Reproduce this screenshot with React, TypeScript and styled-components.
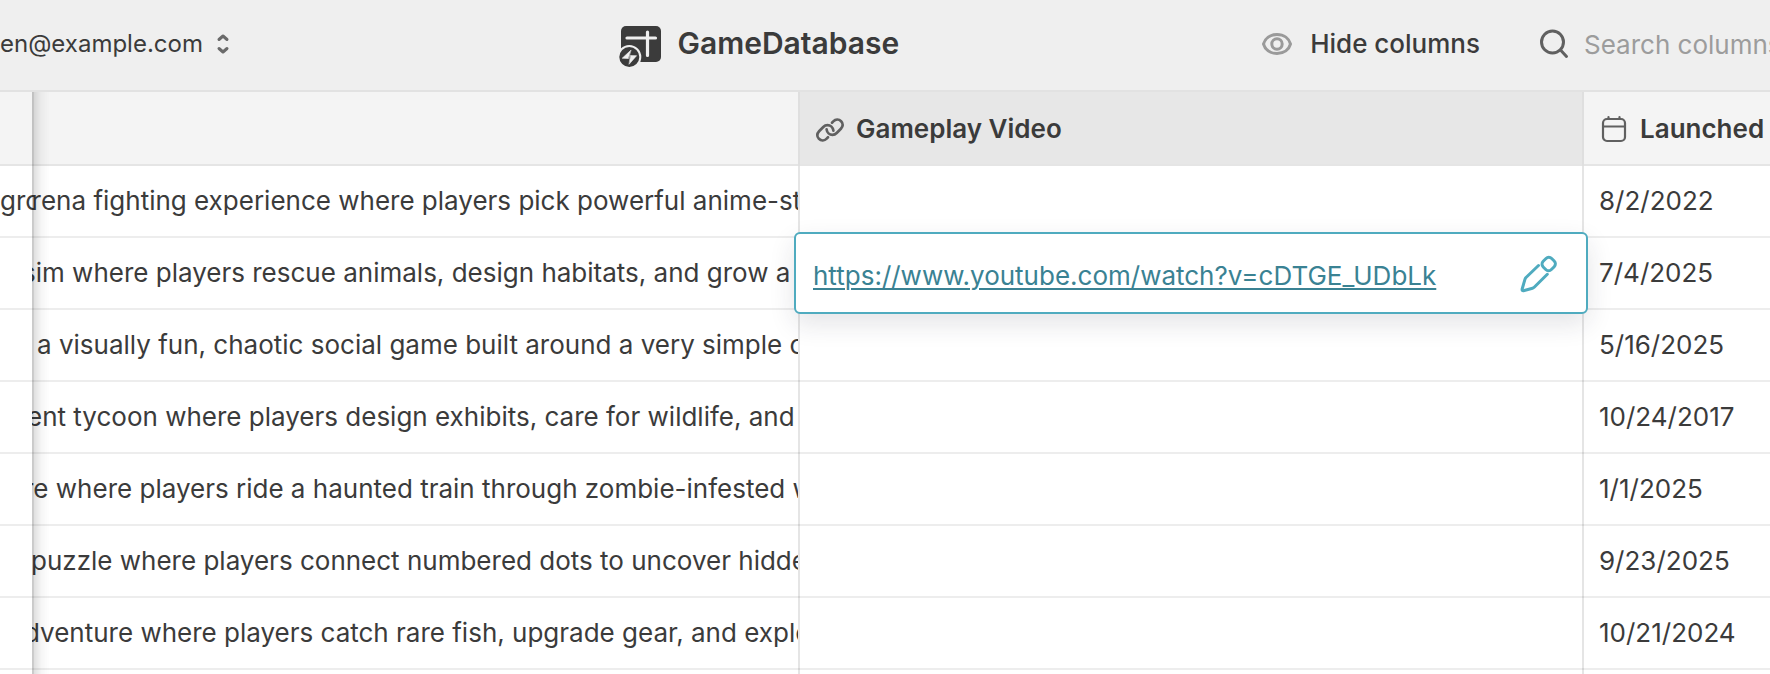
import React from "react";
import styled, { createGlobalStyle } from "styled-components";

const GlobalStyle = createGlobalStyle`
  * { box-sizing: border-box; }
  body { margin: 0; background: #fff; overflow: hidden; }
`;

const Page = styled.div`
  height: 100vh;
  overflow: hidden;
  color: #3b3b3b;
  font-family: Inter, "Liberation Sans", sans-serif;
  font-size: 26px;
  line-height: 32px;
`;

const TopBar = styled.header`
  display: flex;
  align-items: center;
  height: 92px;
  padding-bottom: 4px;
  background: #efefef;
  box-shadow: inset 0 -2px 0 #e2e2e2;
  overflow: hidden;
`;

const PlainButton = styled.button`
  display: flex;
  align-items: center;
  padding: 0;
  border: 0;
  background: none;
  color: inherit;
  font: inherit;
  white-space: nowrap;
`;

const Account = styled.div`
  flex: 0 0 35%;
`;

const AccountButton = styled(PlainButton)`
  gap: 14px;
  font-size: 24px;
`;

const Brand = styled.h1`
  display: flex;
  align-items: center;
  gap: 16px;
  margin: 0;
  padding-bottom: 2px;
  font-size: 30px;
  font-weight: 600;
  line-height: 36px;
`;

const Tools = styled.div`
  display: flex;
  align-items: center;
  gap: 60px;
  margin-left: auto;
`;

const HideButton = styled(PlainButton)`
  gap: 18px;
  font-weight: 500;
`;

const Search = styled.label`
  display: flex;
  align-items: center;
  gap: 16px;
`;

const SearchInput = styled.input`
  width: 186px;
  padding: 2px 0 0;
  border: 0;
  outline: 0;
  background: none;
  color: inherit;
  font: inherit;
  &::placeholder { color: #9c9c9c; opacity: 1; }
`;

const Sheet = styled.table`
  width: 100%;
  table-layout: fixed;
  border-collapse: separate;
  border-spacing: 0;
`;

const Column = styled.col<{ $width?: number }>`
  width: ${(p) => (p.$width ? p.$width + "px" : "auto")};
`;

const HeadCell = styled.th<{ $active?: boolean; $ruled?: boolean }>`
  position: relative;
  height: 74px;
  padding: 0;
  background: ${(p) => (p.$active ? "#e7e7e7" : "#f4f4f4")};
  box-shadow: inset ${(p) => (p.$ruled ? "-2px" : "0")} 0 0 #dfdfdf, inset 0 -2px 0 #e5e5e5;
  font-weight: 600;
  text-align: left;
`;

const HeadLabel = styled.div`
  display: flex;
  align-items: center;
  gap: 12px;
  padding-left: 16px;
  white-space: nowrap;
`;

const Cell = styled.td<{ $ruled?: boolean }>`
  position: relative;
  height: 72px;
  padding: 0 0 2px;
  box-shadow: inset ${(p) => (p.$ruled ? "-2px" : "0")} 0 0 rgba(0, 0, 0, 0.1),
    inset 0 -2px 0 rgba(0, 0, 0, 0.07);
`;

const FrozenEdge = styled.span`
  position: absolute;
  top: 0;
  bottom: 0;
  left: 100%;
  z-index: 1;
  width: 18px;
  border-left: 2px solid rgba(0, 0, 0, 0.2);
  background: linear-gradient(to right, rgba(0, 0, 0, 0.12), rgba(0, 0, 0, 0.03) 50%, rgba(0, 0, 0, 0));
`;

const FrozenText = styled.div`
  margin-right: -2px;
  overflow: hidden;
  white-space: nowrap;
`;

const ScrolledText = styled.div<{ $scroll: number }>`
  margin-right: 2px;
  overflow: hidden;
  white-space: nowrap;
  text-indent: ${(p) => -p.$scroll}px;
`;

const DateText = styled.div`
  padding-left: 15px;
  white-space: nowrap;
`;

const LinkEditor = styled.div`
  position: absolute;
  inset: -6px -4px -4px -6px;
  z-index: 2;
  display: flex;
  align-items: center;
  justify-content: space-between;
  padding: 0 28px 0 17px;
  border: 2px solid #4fabbf;
  border-radius: 6px;
  background: #fff;
  box-shadow: 0 10px 26px rgba(30, 30, 60, 0.12);
`;

const VideoLink = styled.a`
  padding-top: 6px;
  color: #3a8293;
  text-decoration: underline;
  text-decoration-thickness: 2px;
  text-underline-offset: 3px;
`;

const Icon = styled.svg`
  flex: none;
  display: block;
  overflow: visible;
  fill: none;
  stroke-linecap: round;
  stroke-linejoin: round;
`;

const SortIcon = () => (
  <Icon width="12" height="20" viewBox="0 0 12 20" stroke="#6a6a6a" strokeWidth="3" aria-hidden>
    <path d="M2 5.5 6 2l4 3.5M2 14.5 6 18l4-3.5" />
  </Icon>
);

const BrandIcon = () => (
  <Icon width="42" height="48" viewBox="1 0 42 48" aria-hidden>
    <rect x="2" y="7" width="40" height="36" rx="5" fill="#3b3b3b" />
    <path d="M8 19H36.500M28.500 13V36.500" stroke="#efefef" strokeWidth="3.200" />
    <circle cx="10.300" cy="38" r="11" fill="#3b3b3b" stroke="#efefef" strokeWidth="2" />
    <path d="M11.800 31.300 3.200 39.200 9.200 39.500ZM10.300 45 17.600 36.700 11.600 36.600Z" fill="#efefef" stroke="#efefef" strokeWidth="0.600" />
  </Icon>
);

const EyeIcon = () => (
  <Icon width="30" height="22" viewBox="0 0 30 22" stroke="#9a9a9a" strokeWidth="3" aria-hidden>
    <path d="M1.500 11C3 5.500 8 1.500 15 1.500S27 5.500 28.500 11C27 16.500 22 20.500 15 20.500S3 16.500 1.500 11Z" />
    <circle cx="15" cy="11" r="5.200" />
  </Icon>
);

const SearchIcon = () => (
  <Icon width="28" height="30" viewBox="0 0 28 30" stroke="#606060" strokeWidth="3" aria-hidden>
    <circle cx="12.500" cy="13" r="11" />
    <path d="m20.500 21 6 6.500" />
  </Icon>
);

const ChainIcon = () => (
  <Icon width="28" height="28" viewBox="0 0 28 28" stroke="#606060" strokeWidth="2.700" aria-hidden>
    <path d="M10.600 14.300C11 17.500 13.500 19.800 16.500 19.800c1.600 0 3-.6 4.200-1.800l4.200-4.300c2.300-2.400 2.400-5.400.2-7.500s-5.600-2-7.800.2l-1.300 1.300" />
    <path d="M17.400 15.700C17 12.500 14.500 10.200 11.500 10.200c-1.600 0-3 .6-4.200 1.800l-4.200 4.300c-2.300 2.400-2.400 5.400-.2 7.500s5.600 2 7.800-.2l1.300-1.300" />
  </Icon>
);

const CalendarIcon = () => (
  <Icon width="28" height="26" viewBox="-2 0 28 26" stroke="#606060" strokeWidth="2.200" aria-hidden>
    <rect x="1" y="3" width="22" height="22" rx="4" />
    <path d="M1.500 10.500h21M6.500 1v2M17.500 1v2" />
  </Icon>
);

const PencilIcon = () => (
  <Icon width="38" height="38" viewBox="0 -1 38 38" stroke="#4fabbf" strokeWidth="3" aria-hidden>
    <path d="M18.500 10.500 6 22.500Q5.300 23.300 5 24.200L2.300 33.500C1.700 35.500 2.300 36 4.300 35.500L12.500 33.200Q13.500 32.900 14.200 32.200L27.300 19.300" />
    <rect x="22.900" y="3" width="11.600" height="12" rx="4" transform="rotate(45 28.700 9)" />
  </Icon>
);

type Row = { frozen?: string; text: string; scroll: number; date: string; video?: string };

const rows: Row[] = [
  { frozen: "grow", text: "arena fighting experience where players pick powerful anime-styled fighters", scroll: 15, date: "8/2/2022" },
  {
    text: "sim where players rescue animals, design habitats, and grow a",
    scroll: 10,
    date: "7/4/2025",
    video: "https://www.youtube.com/watch?v=cDTGE_UDbLk",
  },
  { text: "a visually fun, chaotic social game built around a very simple core", scroll: -5, date: "5/16/2025" },
  { text: "ent tycoon where players design exhibits, care for wildlife, and", scroll: 5, date: "10/24/2017" },
  { text: "re where players ride a haunted train through zombie-infested wilds", scroll: 8, date: "1/1/2025" },
  { text: "puzzle where players connect numbered dots to uncover hidden", scroll: 1, date: "9/23/2025" },
  { text: "dventure where players catch rare fish, upgrade gear, and explore", scroll: 8, date: "10/21/2024" },
  { text: "", scroll: 0, date: "" },
];

export default function App() {
  return (
    <Page>
      <GlobalStyle />
      <TopBar>
        <Account>
          <AccountButton type="button">
            en@example.com
            <SortIcon />
          </AccountButton>
        </Account>
        <Brand>
          <BrandIcon />
          GameDatabase
        </Brand>
        <Tools>
          <HideButton type="button">
            <EyeIcon />
            Hide columns
          </HideButton>
          <Search>
            <SearchIcon />
            <SearchInput type="text" placeholder="Search columns" aria-label="Search columns" />
          </Search>
        </Tools>
      </TopBar>
      <Sheet>
        <colgroup>
          <Column $width={32} />
          <Column $width={768} />
          <Column $width={784} />
          <Column />
        </colgroup>
        <thead>
          <tr>
            <HeadCell>
              <FrozenEdge />
            </HeadCell>
            <HeadCell $ruled />
            <HeadCell $active $ruled>
              <HeadLabel>
                <ChainIcon />
                Gameplay Video
              </HeadLabel>
            </HeadCell>
            <HeadCell>
              <HeadLabel>
                <CalendarIcon />
                Launched
              </HeadLabel>
            </HeadCell>
          </tr>
        </thead>
        <tbody>
          {rows.map((row, i) => (
            <tr key={i}>
              <Cell>
                <FrozenText>{row.frozen}</FrozenText>
                <FrozenEdge />
              </Cell>
              <Cell $ruled>
                <ScrolledText $scroll={row.scroll}>{row.text}</ScrolledText>
              </Cell>
              <Cell $ruled>
                {row.video && (
                  <LinkEditor>
                    <VideoLink href={row.video}>{row.video}</VideoLink>
                    <PlainButton type="button" aria-label="Edit link">
                      <PencilIcon />
                    </PlainButton>
                  </LinkEditor>
                )}
              </Cell>
              <Cell>
                <DateText>{row.date}</DateText>
              </Cell>
            </tr>
          ))}
        </tbody>
      </Sheet>
    </Page>
  );
}
